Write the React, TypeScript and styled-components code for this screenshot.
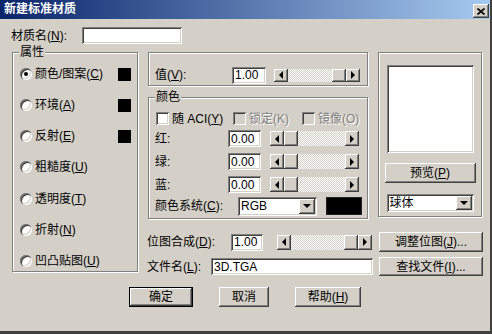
import React from 'react'
import styled, { createGlobalStyle, css } from 'styled-components'

const face = '#d4d0c8'

const raised = css`
  box-shadow: inset -1px -1px #404040, inset 1px 1px #fff, inset -2px -2px #808080, inset 2px 2px ${face};
`
const sunken = css`
  box-shadow: inset 1px 1px #808080, inset -1px -1px #fff, inset 2px 2px #404040, inset -2px -2px ${face};
`

const GlobalStyle = createGlobalStyle`
  html, body {
    margin: 0;
    background: ${face};
  }
  body {
    font-family: "Liberation Sans", "Noto Sans CJK SC", sans-serif;
    font-size: 12px;
    line-height: 14px;
    color: #000;
  }
`

const Window = styled.div`
  width: 492px;
  height: 334px;
  box-sizing: border-box;
  background: ${face};
  border-right: 2px solid #404040;
  border-bottom: 3px solid #404040;
  display: flex;
  flex-direction: column;
`

const TitleBar = styled.div`
  height: 19px;
  flex: none;
  display: flex;
  justify-content: space-between;
  padding: 0 1px 0 4px;
  background: linear-gradient(to right, #0a246a, #a6caf0);
`

const TitleText = styled.span`
  color: #fff;
  font-weight: bold;
  line-height: 19px;
`

const CloseButton = styled.div`
  width: 16px;
  height: 14px;
  margin-top: 4px;
  background: ${face};
  display: flex;
  align-items: center;
  justify-content: center;
  ${raised}
`

const NameRow = styled.div`
  display: flex;
  align-items: center;
  height: 17px;
  margin-top: 8px;
  padding-left: 11px;
`

const Label = styled.span<{ $w?: number }>`
  flex: none;
  width: ${p => (p.$w ? `${p.$w}px` : 'auto')};
  white-space: nowrap;
`

const Hot = styled.span`
  text-decoration: underline;
`

const Field = styled.div<{ $w: number; $h?: number }>`
  flex: none;
  box-sizing: border-box;
  width: ${p => p.$w}px;
  height: ${p => p.$h ?? 17}px;
  background: #fff;
  padding-left: 3px;
  display: flex;
  align-items: center;
  ${sunken}
`

const Main = styled.div`
  display: flex;
  align-items: flex-start;
  margin-top: 8px;
  padding-left: 12px;
`

const Group = styled.div<{ $w: number; $h: number }>`
  position: relative;
  flex: none;
  box-sizing: border-box;
  width: ${p => p.$w}px;
  height: ${p => p.$h}px;
  border: 1px solid #808080;
  box-shadow: inset 1px 1px #fff, 1px 1px #fff;
`

const Caption = styled.span<{ $x: number }>`
  position: absolute;
  top: -8px;
  left: ${p => p.$x}px;
  padding: 0 1px;
  background: ${face};
`

const PropsGroup = styled(Group)`
  display: flex;
  flex-direction: column;
  justify-content: space-between;
  padding: 14px 6px 3px 7px;
`

const RadioRow = styled.div`
  display: flex;
  align-items: center;
  gap: 3px;
  height: 14px;
`

const Radio = styled.span<{ $on?: boolean }>`
  flex: none;
  width: 12px;
  height: 12px;
  border-radius: 50%;
  background: #fff;
  box-shadow: inset 1px 1px #808080, inset 2px 2px #404040, inset -1px -1px #fff, inset -2px -2px ${face};
  display: flex;
  align-items: center;
  justify-content: center;
  &::after {
    content: '';
    width: 4px;
    height: 4px;
    border-radius: 50%;
    background: ${p => (p.$on ? '#000' : 'transparent')};
  }
`

const ColorChip = styled.span`
  margin-left: auto;
  width: 13px;
  height: 13px;
  background: #000;
`

const RightArea = styled.div`
  width: 335px;
  margin-left: 10px;
  display: flex;
  flex-direction: column;
`

const TopRow = styled.div`
  display: flex;
  gap: 10px;
`

const MidColumn = styled.div`
  display: flex;
  flex-direction: column;
  gap: 11px;
`

const ValueGroup = styled(Group)`
  padding: 13px 0 0 6px;
`

const ColorGroup = styled(Group)`
  padding: 13px 0 0 6px;
`

const Row = styled.div<{ $h: number; $gap?: number }>`
  display: flex;
  align-items: center;
  height: ${p => p.$h}px;
  gap: ${p => p.$gap ?? 0}px;
`

const CheckItem = styled.div<{ $w: number; $off?: boolean }>`
  flex: none;
  width: ${p => p.$w}px;
  display: flex;
  align-items: center;
  gap: 3px;
  color: ${p => (p.$off ? '#808080' : '#000')};
  text-shadow: ${p => (p.$off ? '1px 1px #fff' : 'none')};
`

const CheckBox = styled.span<{ $off?: boolean }>`
  flex: none;
  width: 13px;
  height: 13px;
  background: ${p => (p.$off ? face : '#fff')};
  ${sunken}
`

const BigSwatch = styled.div`
  flex: none;
  width: 36px;
  height: 18px;
  margin-left: 9px;
  background: #000;
  box-shadow: inset 0 0 0 1px #202020;
`

const SelectBox = styled.div<{ $w: number; $h: number }>`
  flex: none;
  box-sizing: border-box;
  width: ${p => p.$w}px;
  height: ${p => p.$h}px;
  background: #fff;
  padding: 2px;
  display: flex;
  align-items: center;
  ${sunken}
`

const SelectText = styled.span`
  flex: 1;
  padding-left: 1px;
`

const DropButton = styled.span`
  flex: none;
  width: 16px;
  height: 100%;
  background: ${face};
  display: flex;
  align-items: center;
  justify-content: center;
  ${raised}
`

const Arrow = styled.span<{ $dir: 'left' | 'right' | 'down' }>`
  width: 0;
  height: 0;
  ${p =>
    p.$dir === 'down'
      ? css`
          border-left: 4px solid transparent;
          border-right: 4px solid transparent;
          border-top: 4px solid #000;
        `
      : css`
          border-top: 4px solid transparent;
          border-bottom: 4px solid transparent;
          border-${p.$dir === 'left' ? 'right' : 'left'}: 4px solid #000;
        `}
`

const ScrollBar = styled.div<{ $w: number; $h: number; $gap?: number }>`
  flex: none;
  display: flex;
  width: ${p => p.$w}px;
  height: ${p => p.$h}px;
  margin-left: ${p => p.$gap ?? 0}px;
`

const ScrollButton = styled.span`
  flex: none;
  width: 14px;
  height: 100%;
  background: ${face};
  display: flex;
  align-items: center;
  justify-content: center;
  ${raised}
`

const Trough = styled.div<{ $end?: boolean }>`
  flex: 1;
  display: flex;
  justify-content: ${p => (p.$end ? 'flex-end' : 'flex-start')};
  background: repeating-conic-gradient(#fff 0 25%, ${face} 0 50%) 0 0 / 2px 2px;
`

const Thumb = styled.span`
  width: 14px;
  height: 100%;
  background: ${face};
  ${raised}
`

const Button = styled.div<{ $w: number; $h: number; $default?: boolean; $gap?: number }>`
  flex: none;
  box-sizing: border-box;
  width: ${p => p.$w}px;
  height: ${p => p.$h}px;
  margin-left: ${p => p.$gap ?? 0}px;
  background: ${face};
  display: flex;
  align-items: center;
  justify-content: center;
  white-space: nowrap;
  ${raised}
  ${p =>
    p.$default &&
    css`
      border: 1px solid #000;
    `}
`

const PreviewGroup = styled(Group)`
  display: flex;
  flex-direction: column;
  align-items: center;
  padding-top: 12px;
`

const PreviewBox = styled.div`
  width: 87px;
  height: 88px;
  background: #fff;
  ${sunken}
`

const BottomRow = styled.div<{ $top: number; $h: number }>`
  display: flex;
  align-items: center;
  height: ${p => p.$h}px;
  margin-top: ${p => p.$top}px;
  margin-left: -1px;
`

const Footer = styled.div`
  display: flex;
  justify-content: center;
  gap: 26px;
  margin-top: 11px;
`

const Scroll = ({ w, h, end, gap }: { w: number; h: number; end?: boolean; gap?: number }) => (
  <ScrollBar $w={w} $h={h} $gap={gap}>
    <ScrollButton>
      <Arrow $dir="left" />
    </ScrollButton>
    <Trough $end={end}>
      <Thumb />
    </Trough>
    <ScrollButton>
      <Arrow $dir="right" />
    </ScrollButton>
  </ScrollBar>
)

const Select = ({ w, h, value }: { w: number; h: number; value: string }) => (
  <SelectBox $w={w} $h={h}>
    <SelectText>{value}</SelectText>
    <DropButton>
      <Arrow $dir="down" />
    </DropButton>
  </SelectBox>
)

const radios = [
  { text: '颜色/图案', key: 'C', chip: true, on: true },
  { text: '环境', key: 'A', chip: true },
  { text: '反射', key: 'E', chip: true },
  { text: '粗糙度', key: 'U' },
  { text: '透明度', key: 'T' },
  { text: '折射', key: 'N' },
  { text: '凹凸贴图', key: 'U' },
]

const rgb = ['红', '绿', '蓝']

export default function App() {
  return (
    <>
      <GlobalStyle />
      <Window>
        <TitleBar>
          <TitleText>新建标准材质</TitleText>
          <CloseButton>
            <svg width="8" height="7" viewBox="0 0 8 7">
              <path d="M0.5 0.5 L7.5 6.5 M7.5 0.5 L0.5 6.5" stroke="#000" strokeWidth="1.6" />
            </svg>
          </CloseButton>
        </TitleBar>

        <NameRow>
          <Label $w={71}>
            材质名(<Hot>N</Hot>):
          </Label>
          <Field $w={100} />
        </NameRow>

        <Main>
          <PropsGroup $w={126} $h={220}>
            <Caption $x={6}>属性</Caption>
            {radios.map(r => (
              <RadioRow key={r.text}>
                <Radio $on={r.on} />
                <span>
                  {r.text}(<Hot>{r.key}</Hot>)
                </span>
                {r.chip && <ColorChip />}
              </RadioRow>
            ))}
          </PropsGroup>

          <RightArea>
            <TopRow>
              <MidColumn>
                <ValueGroup $w={220} $h={34}>
                  <Row $h={18}>
                    <Label $w={77}>
                      值(<Hot>V</Hot>):
                    </Label>
                    <Field $w={34}>1.00</Field>
                    <Scroll w={86} h={13} end gap={8} />
                  </Row>
                </ValueGroup>

                <ColorGroup $w={220} $h={122}>
                  <Caption $x={6}>颜色</Caption>
                  <Row $h={15} style={{ marginLeft: 1 }}>
                    <CheckItem $w={77}>
                      <CheckBox />
                      <span>
                        随 ACI(<Hot>Y</Hot>)
                      </span>
                    </CheckItem>
                    <CheckItem $w={69} $off>
                      <CheckBox $off />
                      <span>锁定(K)</span>
                    </CheckItem>
                    <CheckItem $w={60} $off>
                      <CheckBox $off />
                      <span>镜像(O)</span>
                    </CheckItem>
                  </Row>
                  <div style={{ height: 1 }} />
                  {rgb.map(c => (
                    <Row $h={23} key={c}>
                      <Label $w={73}>{c}:</Label>
                      <Field $w={33}>0.00</Field>
                      <Scroll w={89} h={15} gap={9} />
                    </Row>
                  ))}
                  <Row $h={20}>
                    <Label $w={83}>
                      颜色系统(<Hot>C</Hot>):
                    </Label>
                    <Select w={79} h={19} value="RGB" />
                    <BigSwatch />
                  </Row>
                </ColorGroup>
              </MidColumn>

              <PreviewGroup $w={104} $h={165}>
                <PreviewBox />
                <Button $w={91} $h={20} style={{ marginTop: 10 }}>
                  预览(<Hot>P</Hot>)
                </Button>
                <div style={{ height: 11 }} />
                <Select w={87} h={18} value="球体" />
              </PreviewGroup>
            </TopRow>

            <BottomRow $top={13} $h={20}>
              <Label $w={84}>
                位图合成(<Hot>D</Hot>):
              </Label>
              <Field $w={32}>1.00</Field>
              <Scroll w={95} h={15} end gap={14} />
              <Button $w={104} $h={20} $gap={7}>
                调整位图(<Hot>J</Hot>)...
              </Button>
            </BottomRow>

            <BottomRow $top={5} $h={19}>
              <Label $w={64}>
                文件名(<Hot>L</Hot>):
              </Label>
              <Field $w={162}>3D.TGA</Field>
              <Button $w={104} $h={19} $gap={6}>
                查找文件(<Hot>I</Hot>)...
              </Button>
            </BottomRow>
          </RightArea>
        </Main>

        <Footer>
          <Button $w={64} $h={20} $default>
            确定
          </Button>
          <Button $w={50} $h={20}>
            取消
          </Button>
          <Button $w={66} $h={20}>
            帮助(<Hot>H</Hot>)
          </Button>
        </Footer>
      </Window>
    </>
  )
}
